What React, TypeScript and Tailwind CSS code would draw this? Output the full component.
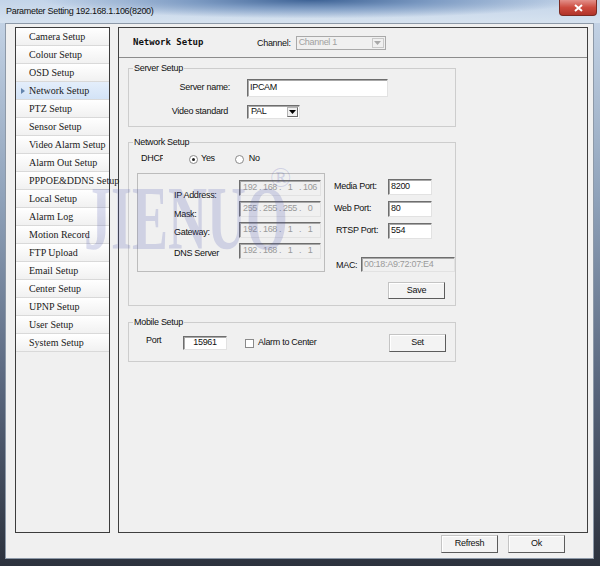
import { Fragment } from "react";

const SANS = "font-['Liberation_Sans',Arial,sans-serif] tracking-[-0.3px]";
const SERIF = "font-['Liberation_Serif','Times_New_Roman',serif] tracking-normal";

const menu = [
  "Camera Setup",
  "Colour Setup",
  "OSD Setup",
  "Network Setup",
  "PTZ Setup",
  "Sensor Setup",
  "Video Alarm Setup",
  "Alarm Out Setup",
  "PPPOE&DDNS Setup",
  "Local Setup",
  "Alarm Log",
  "Motion Record",
  "FTP Upload",
  "Email Setup",
  "Center Setup",
  "UPNP Setup",
  "User Setup",
  "System Setup",
];

const sunken =
  "border border-t-[#6e6e6e] border-l-[#6e6e6e] border-b-[#e2e2e2] border-r-[#e2e2e2] shadow-[inset_1px_1px_0_#a8a8a8]";

const Arrow = ({ color = "#000" }: { color?: string }) => (
  <svg width="7" height="4" viewBox="0 0 7 4">
    <polygon points="0,0 7,0 3.5,4" fill={color} />
  </svg>
);

const TextBox = ({ w, h = 16, value, center }: { w: string; h?: number; value: string; center?: boolean }) => (
  <div
    className={`${w} ${sunken} bg-white flex items-center px-[2px] text-[9px] text-[#111] ${center ? "justify-center" : ""}`}
    style={{ height: h }}
  >
    {value}
  </div>
);

const IpField = ({ parts }: { parts: string[] }) => (
  <div className={`w-[82px] h-[16px] ${sunken} bg-[#f0f0f0] flex items-center px-[2px] text-[9px] text-[#9a9a9a]`}>
    {parts.map((p, i) => (
      <Fragment key={i}>
        {i > 0 && <span className="w-[4px] text-center">.</span>}
        <span className="w-[16px] text-center">{p}</span>
      </Fragment>
    ))}
  </div>
);

const Btn = ({ label, w = "w-[57px]", h = "h-[17px]" }: { label: string; w?: string; h?: string }) => (
  <div
    className={`${w} ${h} flex items-center justify-center text-[9px] text-[#111] bg-[#f3f3f3] border border-t-[#c4c4c4] border-l-[#c4c4c4] border-b-[#5c5c5c] border-r-[#5c5c5c] shadow-[inset_1px_1px_0_#ffffff]`}
  >
    {label}
  </div>
);

const Radio = ({ checked }: { checked?: boolean }) => (
  <div className="w-[9px] h-[9px] rounded-full border border-[#8a8a8a] bg-white flex items-center justify-center">
    {checked && <div className="w-[3px] h-[3px] rounded-full bg-[#222]" />}
  </div>
);

export default function App() {
  return (
    <div className={`relative w-[600px] h-[566px] overflow-hidden ${SANS} bg-[linear-gradient(180deg,#c9d8ea_0%,#8fa2ba_35%,#56637a_70%,#2c323d_100%)]`}>
      {/* title bar */}
      <div className="h-[23px] flex items-start bg-[radial-gradient(ellipse_45%_80%_at_52%_0%,#3d6295_0%,#7d9bc3_45%,transparent_100%),linear-gradient(180deg,#c3d4e9,#d6e2ef)]">
        <div className="pl-[6px] h-[23px] flex items-center text-[9px] text-[#111]">
          Parameter Setting 192.168.1.106(8200)
        </div>
        <div className="ml-auto mr-[3px] w-[38px] h-[16px] rounded-b-[4px] border border-t-0 border-[#7a2a22] bg-[linear-gradient(180deg,#e3908a_0%,#cc4b3f_50%,#b1342a_100%)] flex items-center justify-center">
          <svg width="9" height="8" viewBox="0 0 9 8">
            <path d="M1 1 L8 7 M8 1 L1 7" stroke="#fff" strokeWidth="2" />
          </svg>
        </div>
      </div>

      {/* client area */}
      <div className="ml-[5px] w-[589px] h-[536px] bg-[#f0f0f0] border border-[#8d99a8] pl-[9px] pt-[3px] flex flex-col">
        <div className="flex h-[506px]">
          {/* left menu */}
          <div className={`w-[95px] h-[506px] border border-[#3c3c3c] bg-[#f0f0f0] ${SERIF}`}>
            {menu.map((m) => {
              const sel = m === "Network Setup";
              return (
                <div
                  key={m}
                  className={`relative h-[18px] flex items-center pl-[13px] text-[10px] text-[#1a1a1a] whitespace-nowrap border-b border-[#d9d9d9] ${
                    sel
                      ? "bg-[linear-gradient(180deg,#e4eefb,#d3e3f6)]"
                      : "bg-[linear-gradient(180deg,#ffffff,#f1f1f1)]"
                  }`}
                >
                  {sel && (
                    <svg className="absolute left-[5px] top-[6px]" width="4" height="6" viewBox="0 0 4 6">
                      <polygon points="0,0 4,3 0,6" fill="#6585ad" />
                    </svg>
                  )}
                  {m}
                </div>
              );
            })}
          </div>

          {/* main panel */}
          <div className="ml-[8px] w-[470px] h-[506px] border border-[#3f3f3f] flex flex-col">
            <div className="h-[30px] border-b border-[#8c8c8c] flex items-center pl-[14px]">
              <div className="w-[124px] font-['DejaVu_Sans_Mono',monospace] tracking-normal font-bold text-[9px] text-[#111]">
                Network Setup
              </div>
              <div className="mt-[3px] text-[9px] text-[#111]">Channel:</div>
              <div className="ml-[5px] mt-[1px] w-[90px] h-[14px] border border-[#a9a9a9] bg-[#f0f0f0] flex items-center pl-[2px] text-[9px] text-[#a0a0a0]">
                Channel 1
                <div className="ml-auto mr-[1px] w-[12px] h-[10px] border border-[#c9c9c9] flex items-center justify-center">
                  <Arrow color="#a8a8a8" />
                </div>
              </div>
            </div>

            {/* Server Setup */}
            <fieldset className="ml-[9px] mt-[4px] w-[328px] border border-[#cdcdcd] pb-[7px]">
              <legend className="ml-[4px] px-[1px] text-[9px] leading-[12px] text-[#111]">Server Setup</legend>
              <div className="grid grid-cols-[101px_141px] gap-x-[17px] items-center text-[9px] text-[#111]">
                <div className="mt-[5px] text-right">Server name:</div>
                <div className="mt-[5px]">
                  <TextBox w="w-[141px]" h={18} value="IPCAM" />
                </div>
                <div className="mt-[8px] text-right pr-[2px]">Video standard</div>
                <div className="mt-[8px]">
                  <div className={`w-[53px] h-[14px] ${sunken} bg-white flex items-center pl-[3px]`}>
                    PAL
                    <div className="ml-auto mr-[1px] w-[11px] h-[10px] bg-[#f0f0f0] border border-[#b5b5b5] border-b-[#6a6a6a] border-r-[#6a6a6a] flex items-center justify-center">
                      <Arrow />
                    </div>
                  </div>
                </div>
              </div>
            </fieldset>

            {/* Network Setup */}
            <fieldset className="ml-[9px] mt-[9px] w-[328px] border border-[#cdcdcd] pl-[8px] pb-[6px] text-[9px] text-[#111]">
              <legend className="ml-[-4px] px-[1px] leading-[12px]">Network Setup</legend>
              <div className="mt-[4px] h-[14px] flex items-center">
                <div className="ml-[4px] w-[22px] overflow-hidden whitespace-nowrap">DHCP</div>
                <div className="ml-[26px]"><Radio checked /></div>
                <div className="ml-[3px]">Yes</div>
                <div className="ml-[20px]"><Radio /></div>
                <div className="ml-[5px]">No</div>
              </div>
              <div className="mt-[7px] flex">
                <div className="w-[188px] h-[99px] border border-[#bcbcbc] flex">
                  <div className="ml-[36px] w-[65px] flex flex-col leading-[12px]">
                    <div className="mt-[15px]">IP Address:</div>
                    <div className="mt-[7px]">Mask:</div>
                    <div className="mt-[6px]">Gateway:</div>
                    <div className="mt-[9px]">DNS Server</div>
                  </div>
                  <div className="mt-[6px] flex flex-col gap-[5px]">
                    <IpField parts={["192", "168", "1", "106"]} />
                    <IpField parts={["255", "255", "255", "0"]} />
                    <IpField parts={["192", "168", "1", "1"]} />
                    <IpField parts={["192", "168", "1", "1"]} />
                  </div>
                </div>
                <div className="ml-[9px] w-[121px] flex flex-col">
                  <div className="mt-[6px] h-[16px] flex items-center">
                    <div className="w-[54px]">Media Port:</div>
                    <TextBox w="w-[44px]" value="8200" />
                  </div>
                  <div className="mt-[6px] h-[16px] flex items-center">
                    <div className="w-[54px]">Web Port:</div>
                    <TextBox w="w-[44px]" value="80" />
                  </div>
                  <div className="mt-[6px] h-[16px] flex items-center">
                    <div className="w-[54px] pl-[2px]">RTSP Port:</div>
                    <TextBox w="w-[44px]" value="554" />
                  </div>
                  <div className="mt-[18px] h-[15px] flex items-center">
                    <div className="w-[27px] pl-[2px] pt-[3px]">MAC:</div>
                    <div className={`w-[94px] h-[15px] ${sunken} bg-[#f0f0f0] flex items-center px-[2px] text-[#9a9a9a]`}>
                      00:18:A9:72:07:E4
                    </div>
                  </div>
                  <div className="mt-[10px] ml-[54px]">
                    <Btn label="Save" />
                  </div>
                </div>
              </div>
            </fieldset>

            {/* Mobile Setup */}
            <fieldset className="ml-[9px] mt-[10px] w-[328px] border border-[#cdcdcd] pl-[17px] pr-[9px] pb-[9px] text-[9px] text-[#111]">
              <legend className="ml-[-13px] px-[1px] leading-[12px]">Mobile Setup</legend>
              <div className="mt-[6px] h-[18px] flex items-center">
                <div className="w-[37px] -mt-[4px]">Port</div>
                <TextBox w="w-[44px]" h={14} value="15961" center />
                <div className="ml-[18px] w-[9px] h-[9px] border border-[#8a8a8a] bg-white" />
                <div className="ml-[4px]">Alarm to Center</div>
                <div className="ml-auto">
                  <Btn label="Set" h="h-[18px]" />
                </div>
              </div>
            </fieldset>
          </div>
        </div>

        {/* bottom buttons */}
        <div className="mt-[2px] flex justify-end gap-[10px] pr-[28px]">
          <Btn label="Refresh" h="h-[18px]" />
          <Btn label="Ok" h="h-[18px]" />
        </div>
      </div>

      {/* watermark */}
      <div className="pointer-events-none absolute left-[84px] top-[174px]">
        <div className={`${SERIF} font-bold text-[90px] leading-none text-[#4a55b0]/20 scale-x-[0.6] origin-left whitespace-nowrap`}>
          JIENUO
        </div>
      </div>
      <div className={`pointer-events-none absolute left-[270px] top-[164px] ${SERIF} text-[28px] leading-none text-[#4a55b0]/20`}>
        ®
      </div>
    </div>
  );
}
